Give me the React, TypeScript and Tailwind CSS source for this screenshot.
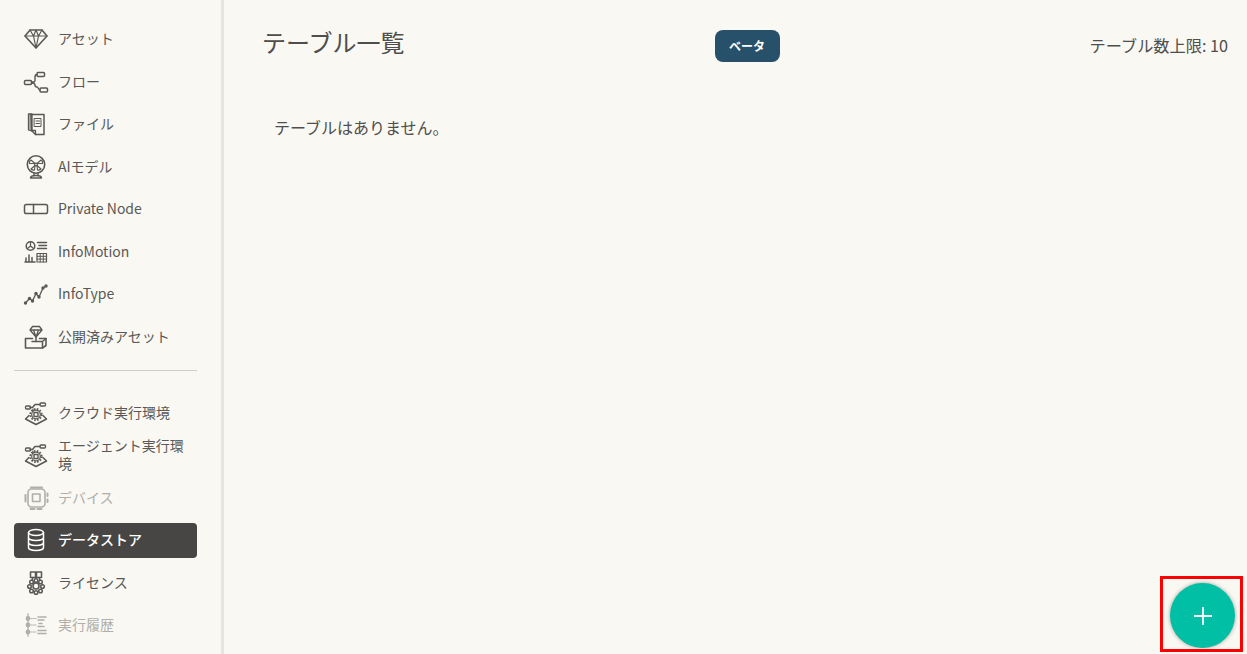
import React from "react";

const Stroke = ({ children }: { children: React.ReactNode }) => (
  <svg
    width="26"
    height="26"
    viewBox="0 0 26 26"
    fill="none"
    stroke="currentColor"
    strokeWidth="1.400"
    strokeLinejoin="round"
    strokeLinecap="round"
  >
    {children}
  </svg>
);

const Diamond = () => (
  <Stroke>
    <path d="M7 4h12l5 6-11 12L2 10z" strokeWidth="1.600" />
    <path d="M2 10h22M7 4l3.500 6L13 22l2.500-12L19 4M10.500 10L13 4l2.500 6" strokeWidth="1.200" />
  </Stroke>
);

const Flow = () => (
  <Stroke>
    <rect x="1.500" y="11.500" width="7" height="4" rx="1" strokeWidth="1.500" />
    <rect x="14" y="3.500" width="7.500" height="4" rx="1" strokeWidth="1.500" />
    <rect x="17" y="19" width="7.500" height="4" rx="1" strokeWidth="1.500" />
    <path d="M8.500 13h2c1 0 1.500-.5 1.500-1.500V8c0-2 .5-2.500 2-2.500M8.500 14c2.500 0 3.500.5 3.500 2s.5 2 2 2 1 3 3 3" />
  </Stroke>
);

const FileIcon = () => (
  <Stroke>
    <path d="M5.500 3h3.500v17l-3.500-1z" fill="currentColor" fillOpacity=".4" strokeWidth="1.300" />
    <path d="M8 3.500h13v20h-8.500L8.500 19.500z" strokeWidth="1.500" />
    <path d="M8.500 19.500h4v4" strokeWidth="1.300" />
    <path d="M11.500 7.500h6.500v8h-6.500zM13 10h3.500M13 12.500h3.500" strokeWidth="1" />
  </Stroke>
);

const Fan = () => (
  <Stroke>
    <circle cx="13" cy="10.500" r="8.700" strokeWidth="1.600" />
    <circle cx="13" cy="10.500" r="1.400" strokeWidth="1.200" />
    <path d="M12 9.500L8 6c-1.500 1-2 2.500-1.500 3.500zM14 9.500L18 6c1.500 1 2 2.500 1.500 3.500zM12 11.500L8 15c1.500 1 2.500 1.500 3.500 1zM14 11.500l4 3.500c-1.500 1-2.500 1.500-3.500 1z" strokeWidth="1.100" />
    <path d="M11 19.500v2M15 19.500v2M7.500 24c0-1.800 2-2.500 5.500-2.500s5.500.7 5.500 2.500z" strokeWidth="1.400" />
  </Stroke>
);

const NodeIcon = () => (
  <Stroke>
    <rect x="1.500" y="8.500" width="23" height="9" rx="1.800" strokeWidth="1.500" />
    <path d="M10.500 8.500v9" strokeWidth="1.500" />
  </Stroke>
);

const Motion = () => (
  <Stroke>
    <circle cx="7.500" cy="7" r="4.300" strokeWidth="1.500" />
    <path d="M7.500 3v4l3 2.500M7.500 7l-3 2.500" strokeWidth="1.200" />
    <path d="M14.500 3.500h9M16 6.500h7.500M14.500 9.500h9" strokeWidth="1.500" />
    <path d="M3 19v3.500M6 16v6.500M9 18.500v4M2 23h10" strokeWidth="1.500" />
    <rect x="14" y="14.500" width="9.500" height="8.500" strokeWidth="1.200" />
    <path d="M14 17.300h9.500M14 20.100h9.500M17.200 14.500V23M20.300 14.500V23" strokeWidth="1" />
  </Stroke>
);

const TypeIcon = () => (
  <Stroke>
    <path d="M2.500 22l4-4.500 3 2.500 3.500-7.500 3 3.500 4-9 3-2" strokeWidth="1.300" />
    <g fill="currentColor" stroke="none">
      <circle cx="2.500" cy="22" r="1.700" />
      <circle cx="6.500" cy="17.500" r="1.700" />
      <circle cx="9.500" cy="20" r="1.700" />
      <circle cx="13" cy="12.500" r="1.700" />
      <circle cx="16" cy="16" r="1.700" />
      <circle cx="20" cy="7" r="1.700" />
      <circle cx="23" cy="5" r="1.700" />
    </g>
  </Stroke>
);

const Published = () => (
  <Stroke>
    <path d="M9.500 14.500H2.500v9.500h17l3.500-2.500v-7h-6.500" strokeWidth="1.600" />
    <path d="M19.500 24v-6.500H9M19.500 17.500l3.500-3" strokeWidth="1.500" />
    <path d="M9.500 2.500h7l2.500 3.500-6 7-6-7zM7 6h12M10.500 6L13 13l2.500-7" strokeWidth="1.300" />
    <path d="M13 13v4.500" strokeWidth="1.500" />
  </Stroke>
);

const Runtime = () => (
  <Stroke>
    <path d="M7 7.500h2.500L12 4.500h5" strokeWidth="1.500" />
    <rect x="2.500" y="6" width="5" height="3" rx="1" strokeWidth="1.300" />
    <rect x="17" y="3" width="5.500" height="3" rx="1" strokeWidth="1.300" />
    <path d="M10 9.500v1.500" strokeWidth="1.300" />
    <circle cx="13" cy="14.500" r="5.700" strokeWidth="1.800" strokeDasharray="1.600 1.400" strokeLinecap="butt" />
    <circle cx="13" cy="14.500" r="4.300" strokeWidth="1.200" />
    <rect x="11" y="12.500" width="4" height="4" strokeWidth="1.400" />
    <path d="M6 15.500l-3.500 3.500 10.500 5.500L23.500 19 20 15.500" strokeWidth="1.500" />
  </Stroke>
);

const Device = () => (
  <Stroke>
    <rect x="5" y="4" width="17" height="18" rx="3.500" strokeWidth="1.600" />
    <rect x="9.500" y="9" width="7.500" height="7.500" strokeWidth="1.600" />
    <path d="M2.500 10v6.500M24.500 8.500v2.500M24.500 14.500v2.500M8 2.500h11M7.500 24h4M14.500 24h4" strokeWidth="2" />
  </Stroke>
);

const Database = () => (
  <Stroke>
    <ellipse cx="13" cy="5.500" rx="7.500" ry="3" strokeWidth="1.500" />
    <path d="M5.500 5.500v15c0 1.700 3.400 3 7.500 3s7.500-1.300 7.500-3v-15M5.500 10.500c0 1.700 3.400 3 7.500 3s7.500-1.300 7.500-3M5.500 15.500c0 1.700 3.400 3 7.500 3s7.500-1.300 7.500-3" strokeWidth="1.500" />
  </Stroke>
);

const License = () => (
  <Stroke>
    <rect x="7.500" y="2" width="5" height="5.500" strokeWidth="1.500" />
    <rect x="13.500" y="2" width="5" height="5.500" strokeWidth="1.500" />
    <path d="M10 7.500L9 10M16 7.500l1 2.500" strokeWidth="1.500" />
    <circle cx="13" cy="16" r="3" strokeWidth="1.600" />
    <g strokeWidth="1.500">
      <circle cx="13" cy="10.500" r="1.800" />
      <circle cx="8.500" cy="12" r="1.800" />
      <circle cx="17.500" cy="12" r="1.800" />
      <circle cx="6.500" cy="16.500" r="1.800" />
      <circle cx="19.500" cy="16.500" r="1.800" />
      <circle cx="8.500" cy="21" r="1.800" />
      <circle cx="17.500" cy="21" r="1.800" />
      <circle cx="13" cy="22.500" r="1.800" />
    </g>
  </Stroke>
);

const History = () => (
  <Stroke>
    <path d="M5 2v22" strokeWidth="1.300" />
    <circle cx="5" cy="6.500" r="1.700" fill="currentColor" />
    <circle cx="5" cy="13" r="1.700" fill="currentColor" />
    <circle cx="5" cy="20" r="1.700" fill="currentColor" />
    <path d="M8 6.500h5M8 13h5M8 20h5" strokeWidth="1" strokeDasharray="1 1" />
    <path d="M15 5h8M15 8h6M16 11.500h3M15 14.500h6M15 18.500h8M15 21.500h8" strokeWidth="1.500" />
  </Stroke>
);

const NavItem = ({
  icon,
  label,
  active,
  disabled,
}: {
  icon: React.ReactNode;
  label: string;
  active?: boolean;
  disabled?: boolean;
}) => {
  const tone = active
    ? "bg-[#474644] text-white font-medium rounded-[4px] h-[35px] my-[3.750px]"
    : disabled
      ? "text-[#b0afab] h-[42.500px]"
      : "text-[#595856] h-[42.500px]";
  return (
    <div className={`flex items-center ml-[14px] mr-[24px] ${tone}`}>
      <div className="w-[44px] flex justify-center shrink-0">{icon}</div>
      <span className="text-[14px] leading-[18px] w-[134px] -translate-y-px">{label}</span>
    </div>
  );
};

export default function App() {
  return (
    <div
      className="relative flex h-[654px] w-[1247px] overflow-hidden bg-[#f9f8f2] text-[#4f4e4c]"
      style={{ fontFamily: '"Noto Sans CJK JP", "Noto Sans", sans-serif' }}
    >
      <aside className="w-[224px] shrink-0 border-r-[3px] border-[#e6e5df] pt-[18px]">
        <NavItem icon={<Diamond />} label="アセット" />
        <NavItem icon={<Flow />} label="フロー" />
        <NavItem icon={<FileIcon />} label="ファイル" />
        <NavItem icon={<Fan />} label="AIモデル" />
        <NavItem icon={<NodeIcon />} label="Private Node" />
        <NavItem icon={<Motion />} label="InfoMotion" />
        <NavItem icon={<TypeIcon />} label="InfoType" />
        <NavItem icon={<Published />} label="公開済みアセット" />
        <div className="ml-[14px] mr-[24px] mt-[11.500px] mb-[21px] h-px bg-[#cfcec9]" />
        <NavItem icon={<Runtime />} label="クラウド実行環境" />
        <NavItem icon={<Runtime />} label="エージェント実行環境" />
        <NavItem icon={<Device />} label="デバイス" disabled />
        <NavItem icon={<Database />} label="データストア" active />
        <NavItem icon={<License />} label="ライセンス" />
        <NavItem icon={<History />} label="実行履歴" disabled />
      </aside>
      <main className="flex-1 pl-[38px] pr-[19px]">
        <div className="flex items-center justify-between pt-[28px]">
          <h1 className="text-[24px] leading-[32px] -mt-[6px]">テーブル一覧</h1>
          <span className="mt-[2px] flex h-[32px] w-[65px] items-center justify-center rounded-[8px] bg-[#27506b] text-[12px] font-bold text-white">
            ベータ
          </span>
          <span className="text-[16.200px] leading-[22px] -mt-[1px]">テーブル数上限: 10</span>
        </div>
        <p className="mt-[53px] pl-[12px] text-[16px] leading-[24px]">テーブルはありません。</p>
      </main>
      <button className="absolute left-[1170px] top-[583px] flex h-[65px] w-[65px] items-center justify-center rounded-full bg-[#00bfa5] shadow-[0_0_4px_rgba(0,0,0,0.35)]">
        <svg width="18" height="18" viewBox="0 0 18 18" stroke="white" strokeWidth="1.800">
          <path d="M9 0v18M0 9h18" />
        </svg>
      </button>
      <div className="pointer-events-none absolute left-[1160px] top-[576px] h-[76px] w-[83px] border-[3px] border-[#ff0000]" />
    </div>
  );
}
